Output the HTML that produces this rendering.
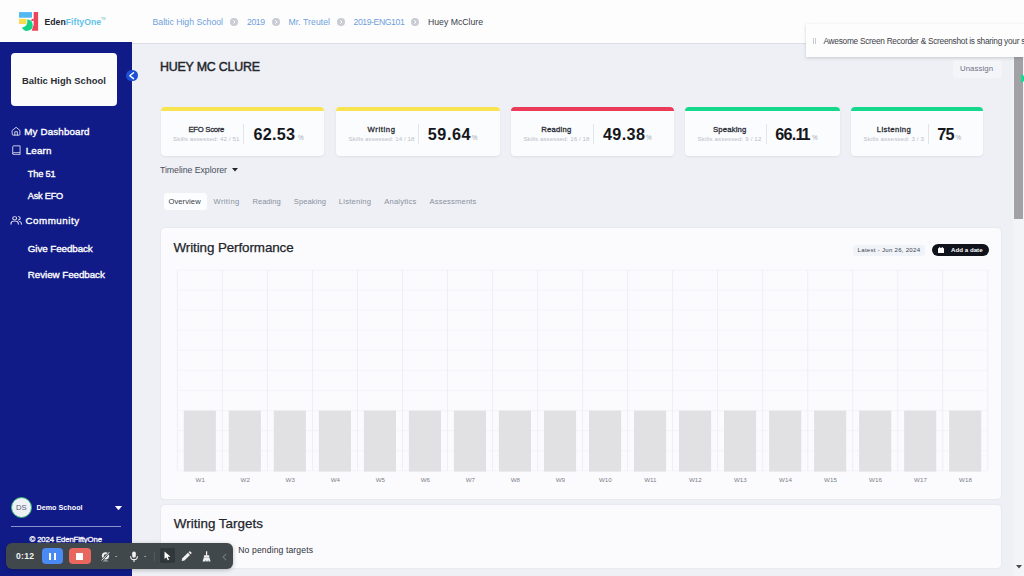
<!DOCTYPE html>
<html lang="en">
<head>
<meta charset="utf-8">
<title>EdenFiftyOne - Huey McClure</title>
<style>
*{box-sizing:border-box;margin:0;padding:0}
html,body{width:1024px;height:576px;overflow:hidden}
body{position:relative;background:#eef0f5;font-family:"Liberation Sans",sans-serif;color:#1f2430}
.t{position:absolute;white-space:nowrap;line-height:1;transform:translateY(-50%)}
.abs{position:absolute}
/* header */
#hdr{position:absolute;left:0;top:0;width:1024px;height:44px;background:#fdfdfe;border-bottom:1px solid #dcdee7}
.bc{font-size:8.7px;color:#6f9fdc}
.sep{position:absolute;width:8px;height:8px;border-radius:50%;background:#c9ccd3;top:17.5px}
/* sidebar */
#side{position:absolute;left:0;top:43px;width:132px;height:533px;background:#111b87}
#side::before{content:"";position:absolute;left:0;top:-0.700px;width:132px;height:1px;background:#111b87}
#school{position:absolute;left:10.600px;top:10.200px;width:106.600px;height:52.800px;background:#fcfcfd;border-radius:4px}
.nav{font-size:9.800px;color:#fff;-webkit-text-stroke:.35px #fff}
/* cards */
.sc{position:absolute;top:107px;height:49px;background:#fbfcfd;border-radius:4px;box-shadow:0 1px 2px rgba(100,110,140,.12)}
.sc i{position:absolute;left:0;top:0;right:0;height:4px;border-radius:4px 4px 0 0}
.sc b.l{font-size:7.700px;color:#2a2d36;font-weight:normal;-webkit-text-stroke:.3px #2a2d36}
.sc span.s{font-size:6.2px;color:#b9bdc8}
.sc em{position:absolute;top:17px;width:1px;height:20px;background:#e2e5ec}
.sc b.v{font-size:16.200px;color:#15171c}
.sc span.p{font-size:6.400px;color:#a4a8b3}
.tab{font-size:7.6px;color:#8a90a0}
.panel{position:absolute;background:#fbfbfd;border-radius:4px;box-shadow:0 0 2px rgba(120,130,160,.18)}
</style>
</head>
<body>

<!-- HEADER -->
<div id="hdr">
  <svg class="abs" style="left:19px;top:12px" width="20" height="20" viewBox="0 0 20 20">
    <rect x="0" y="0.100" width="13" height="5.600" fill="#52b8f0"/>
    <rect x="0" y="6.800" width="7.400" height="5.200" fill="#fbdc4e"/>
    <path d="M8.200 7.600A5.600 5.600 0 1 1 3 15.500Q7.400 14.600 8.200 11z" fill="#12d486"/>
    <path d="M14.700 0.100h4.400v18.600h-6.400l2-6z" fill="#ee4359"/>
    <path d="M14.700 6.400 12.300 7.400v1.600l2.400 0z" fill="#ee4359"/>
  </svg>
  <span class="t" id="logo1" style="left:44.5px;top:22px;font-size:8.7px;font-weight:bold;color:#23252d;letter-spacing:0.01px">Eden<span style="color:#62c3ea">FiftyOne</span><span style="font-size:3px;vertical-align:top;color:#8fd0c8">TM</span></span>

  <span class="t bc" id="bc1" style="left:152.5px;top:21.5px">Baltic High School</span>
  <span class="sep" style="left:229.900px"><svg width="8" height="8" viewBox="0 0 8 8" style="display:block"><path d="M3.300 2.300 5 4 3.300 5.700" fill="none" stroke="#fff" stroke-width="1"/></svg></span>
  <span class="t bc" id="bc2" style="left:247.0px;top:21.5px;letter-spacing:-0.45px">2019</span>
  <span class="sep" style="left:272.100px"><svg width="8" height="8" viewBox="0 0 8 8" style="display:block"><path d="M3.300 2.300 5 4 3.300 5.700" fill="none" stroke="#fff" stroke-width="1"/></svg></span>
  <span class="t bc" id="bc3" style="left:288.5px;top:21.5px;letter-spacing:0.05px">Mr. Treutel</span>
  <span class="sep" style="left:337px"><svg width="8" height="8" viewBox="0 0 8 8" style="display:block"><path d="M3.300 2.300 5 4 3.300 5.700" fill="none" stroke="#fff" stroke-width="1"/></svg></span>
  <span class="t bc" id="bc4" style="left:353.5px;top:21.5px;letter-spacing:-0.43px">2019-ENG101</span>
  <span class="sep" style="left:410.8px"><svg width="8" height="8" viewBox="0 0 8 8" style="display:block"><path d="M3.300 2.300 5 4 3.300 5.700" fill="none" stroke="#fff" stroke-width="1"/></svg></span>
  <span class="t bc" id="bc5" style="left:428.0px;top:21.5px;color:#3a3d46">Huey McClure</span>
</div>

<!-- SIDEBAR -->
<div id="side">
  <div id="school"><span class="t" id="sch" style="left:11.3px;top:28px;font-size:9.4px;font-weight:bold;color:#2b2d33;letter-spacing:0.07px">Baltic High School</span></div>
  <!-- collapse button -->
  <!-- nav -->
  <svg class="abs" style="left:10.800px;top:82.800px" width="10.200" height="10.200" viewBox="0 0 24 24" fill="none" stroke="#e8eaf6" stroke-width="2" stroke-linecap="round" stroke-linejoin="round"><path d="M3 10.5 12 3l9 7.5V20a1.5 1.5 0 0 1-1.5 1.5h-15A1.500 1.500 0 0 1 3 20z"/><path d="M9 21.500v-8h6v8"/></svg>
  <span class="t nav" id="n1" style="left:24.3px;top:88.5px;letter-spacing:0.14px">My Dashboard</span>
  <svg class="abs" style="left:11.800px;top:101.800px" width="8.800" height="10.500" viewBox="0 0 18 21" fill="none" stroke="#e8eaf6" stroke-width="1.700" stroke-linejoin="round"><path d="M1.500 18V3.500a2 2 0 0 1 2-2h13v18h-13a2 2 0 0 1-2-2v0a2 2 0 0 1 2-2h13"/></svg>
  <span class="t nav" id="n2" style="left:25.7px;top:107.500px;letter-spacing:0.16px">Learn</span>
  <span class="t nav" id="n3" style="font-size:9.200px;left:27.8px;top:132.4px;letter-spacing:-0.16px">The 51</span>
  <span class="t nav" id="n4" style="font-size:9.200px;left:27.8px;top:153.6px;letter-spacing:-0.23px">Ask EFO</span>
  <svg class="abs" style="left:9.600px;top:172.300px" width="12.400" height="10.600" viewBox="0 0 24 24" preserveAspectRatio="none" fill="none" stroke="#eceefa" stroke-width="2" stroke-linecap="round" stroke-linejoin="round"><circle cx="9" cy="7.500" r="3.800"/><path d="M2 21v-2a5 5 0 0 1 5-5h4a5 5 0 0 1 5 5v2"/><path d="M16 3.700a3.800 3.800 0 0 1 0 7.600"/><path d="M22 21v-2a5 5 0 0 0-3.500-4.700"/></svg>
  <span class="t nav" id="n5" style="left:25.4px;top:177.9px;letter-spacing:0.53px">Community</span>
  <span class="t nav" id="n6" style="left:27.8px;top:206.4px;letter-spacing:-0.08px">Give Feedback</span>
  <span class="t nav" id="n7" style="left:27.8px;top:231.7px;letter-spacing:-0.06px">Review Feedback</span>
  <!-- footer -->
  <div class="abs" id="av" style="left:11px;top:454px;width:21px;height:21px;border-radius:50%;background:#eef1f6;border:1.500px solid #2fae6b"><span class="t" style="left:4px;top:9.700px;font-size:7.700px;color:#5b6070">DS</span></div>
  <span class="t" id="demo" style="left:36.5px;top:464.600px;font-size:7.200px;font-weight:bold;color:#fff;letter-spacing:0.01px">Demo School</span>
  <svg class="abs" style="left:114.700px;top:463px" width="7" height="4.200" viewBox="0 0 7 4.200"><path d="M0.300 0h6.400L3.500 4z" fill="#fff" stroke="#fff" stroke-width=".5" stroke-linejoin="round"/></svg>
  <div class="abs" style="left:10.500px;top:482.700px;width:110.500px;height:1px;background:#8b92c9"></div>
  <span class="t" id="copy" style="left:29.5px;top:496.500px;font-size:7.800px;color:#fff;-webkit-text-stroke:.3px #fff;letter-spacing:-0.14px">© 2024 EdenFiftyOne</span>
</div>

<!-- MAIN -->
<span class="t" id="title" style="left:160.0px;top:66.5px;font-size:12.400px;color:#23252b;-webkit-text-stroke:.45px #23252b;letter-spacing:-0.20px">HUEY MC CLURE</span>

<!-- SCORE CARDS -->
<div class="sc" id="c0" style="left:160.5px;width:163.5px"><i style="background:#f8e350"></i>
  <b class="t l" id="c0l" style="left:28.0px;top:22.5px;letter-spacing:-0.27px">EFO Score</b>
  <span class="t s" id="c0s" style="left:12.5px;top:32px;letter-spacing:0.08px">Skills assessed: 42 / 51</span>
  <em style="left:82.5px"></em>
  <b class="t v" id="c0v" style="left:93.0px;top:26.700px;letter-spacing:0.25px">62.53</b>
  <span class="t p" id="c0p" style="left:137.5px;top:30.5px">%</span>
</div>
<div class="sc" id="c1" style="left:336px;width:163.5px"><i style="background:#f8e350"></i>
  <b class="t l" id="c1l" style="left:31.6px;top:22.5px;letter-spacing:0.60px">Writing</b>
  <span class="t s" id="c1s" style="left:12.6px;top:32px;letter-spacing:0.05px">Skills assessed: 14 / 18</span>
  <em style="left:81.9px"></em>
  <b class="t v" id="c1v" style="left:91.7px;top:26.700px;letter-spacing:0.60px">59.64</b>
  <span class="t p" id="c1p" style="left:135.7px;top:30.5px">%</span>
</div>
<div class="sc" id="c2" style="left:510.7px;width:163px"><i style="background:#ec3b58"></i>
  <b class="t l" id="c2l" style="left:30.6px;top:22.5px;letter-spacing:0.21px">Reading</b>
  <span class="t s" id="c2s" style="left:12.7px;top:32px;letter-spacing:0.06px">Skills assessed: 16 / 18</span>
  <em style="left:82.3px"></em>
  <b class="t v" id="c2v" style="left:92.2px;top:26.700px;letter-spacing:0.40px">49.38</b>
  <span class="t p" id="c2p" style="left:135.3px;top:30.5px">%</span>
</div>
<div class="sc" id="c3" style="left:685.3px;width:154.3px"><i style="background:#14d98c"></i>
  <b class="t l" id="c3l" style="left:27.7px;top:22.5px;letter-spacing:0.18px">Speaking</b>
  <span class="t s" id="c3s" style="left:12.2px;top:32px;letter-spacing:0.12px">Skills assessed: 9 / 12</span>
  <em style="left:80.3px"></em>
  <b class="t v" id="c3v" style="left:89.9px;top:26.700px;letter-spacing:-0.77px">66.<span style="letter-spacing:-2.900px">1</span>1</b>
  <span class="t p" id="c3p" style="left:126.7px;top:30.5px">%</span>
</div>
<div class="sc" id="c4" style="left:851.2px;width:131.8px"><i style="background:#14d98c"></i>
  <b class="t l" id="c4l" style="left:25.6px;top:22.5px;letter-spacing:0.39px">Listening</b>
  <span class="t s" id="c4s" style="left:12.3px;top:32px;letter-spacing:0.13px">Skills assessed: 3 / 3</span>
  <em style="left:77.1px"></em>
  <b class="t v" id="c4v" style="left:86.0px;top:26.700px;letter-spacing:-0.71px">75</b>
  <span class="t p" id="c4p" style="left:104.3px;top:30.5px">%</span>
</div>

<span class="t" id="tl" style="left:160.0px;top:170px;font-size:8.8px;color:#4a4f5c;letter-spacing:-0.07px">Timeline Explorer</span>
<svg class="abs" style="left:231.5px;top:168px" width="6" height="4" viewBox="0 0 6 4"><path d="M0 0h6L3 3.600z" fill="#23252b"/></svg>

<!-- TABS -->
<div class="abs" style="left:163.500px;top:193px;width:43.500px;height:16.500px;background:#fcfdfe;border-radius:3px"></div>
<span class="t tab" id="t0" style="left:168.4px;top:202px;color:#3a3e4a;letter-spacing:0.09px">Overview</span>
<span class="t tab" id="t1" style="left:213.5px;top:202px;letter-spacing:0.37px">Writing</span>
<span class="t tab" id="t2" style="left:252.5px;top:202px;letter-spacing:-0.03px">Reading</span>
<span class="t tab" id="t3" style="left:293.8px;top:202px;letter-spacing:0.08px">Speaking</span>
<span class="t tab" id="t4" style="left:338.8px;top:202px;letter-spacing:0.22px">Listening</span>
<span class="t tab" id="t5" style="left:384.2px;top:202px;letter-spacing:0.20px">Analytics</span>
<span class="t tab" id="t6" style="left:429.5px;top:202px;letter-spacing:0.17px">Assessments</span>

<!-- PERFORMANCE PANEL -->
<div class="panel" id="perf" style="left:160.800px;top:228px;width:840.500px;height:270.700px">
  <span class="t" id="wp" style="left:12.7px;top:19.500px;font-size:13.400px;color:#23252b;-webkit-text-stroke:.25px #23252b;letter-spacing:-0.09px">Writing Performance</span>
  <div class="abs" id="latest" style="left:692px;top:16.500px;width:72.500px;height:11.500px;border-radius:3px;background:#f0f3f8"><span class="t" id="lt" style="left:4.8px;top:5.800px;font-size:6.100px;color:#3d424f;letter-spacing:0.26px">Latest - Jun 26, 2024</span></div>
  <div class="abs" id="add" style="left:771.500px;top:16px;width:56.500px;height:12px;border-radius:6px;background:#11131c">
    <svg class="abs" style="left:5.500px;top:2.800px" width="6" height="6.500" viewBox="0 0 12 13"><rect x="0" y="2" width="12" height="11" rx="1.500" fill="#fff"/><rect x="2.500" y="0" width="2" height="3.500" fill="#fff"/><rect x="7.500" y="0" width="2" height="3.500" fill="#fff"/></svg>
    <span class="t" id="ad" style="left:18.7px;top:6px;font-size:6.100px;font-weight:bold;color:#fff;letter-spacing:0.05px">Add a date</span>
  </div>
  <svg class="abs" id="chart" style="left:0;top:0" width="840" height="271" viewBox="160.800 228 840 271" font-family="Liberation Sans, sans-serif">
<line x1="177.2" y1="270.0" x2="987.6" y2="270.0" stroke="#f4f4f9" stroke-width="1"/>
<line x1="177.2" y1="290.1" x2="987.6" y2="290.1" stroke="#f4f4f9" stroke-width="1"/>
<line x1="177.2" y1="310.2" x2="987.6" y2="310.2" stroke="#f4f4f9" stroke-width="1"/>
<line x1="177.2" y1="330.2" x2="987.6" y2="330.2" stroke="#f4f4f9" stroke-width="1"/>
<line x1="177.2" y1="350.3" x2="987.6" y2="350.3" stroke="#f4f4f9" stroke-width="1"/>
<line x1="177.2" y1="370.4" x2="987.6" y2="370.4" stroke="#f4f4f9" stroke-width="1"/>
<line x1="177.2" y1="390.5" x2="987.6" y2="390.5" stroke="#f4f4f9" stroke-width="1"/>
<line x1="177.2" y1="410.6" x2="987.6" y2="410.6" stroke="#f4f4f9" stroke-width="1"/>
<line x1="177.2" y1="430.6" x2="987.6" y2="430.6" stroke="#f4f4f9" stroke-width="1"/>
<line x1="177.2" y1="450.7" x2="987.6" y2="450.7" stroke="#f4f4f9" stroke-width="1"/>
<line x1="177.2" y1="470.8" x2="987.6" y2="470.8" stroke="#f4f4f9" stroke-width="1"/>
<line x1="177.2" y1="270" x2="177.2" y2="471" stroke="#eeeef5" stroke-width="1"/>
<line x1="222.2" y1="270" x2="222.2" y2="471" stroke="#eeeef5" stroke-width="1"/>
<line x1="267.2" y1="270" x2="267.2" y2="471" stroke="#eeeef5" stroke-width="1"/>
<line x1="312.3" y1="270" x2="312.3" y2="471" stroke="#eeeef5" stroke-width="1"/>
<line x1="357.3" y1="270" x2="357.3" y2="471" stroke="#eeeef5" stroke-width="1"/>
<line x1="402.3" y1="270" x2="402.3" y2="471" stroke="#eeeef5" stroke-width="1"/>
<line x1="447.3" y1="270" x2="447.3" y2="471" stroke="#eeeef5" stroke-width="1"/>
<line x1="492.3" y1="270" x2="492.3" y2="471" stroke="#eeeef5" stroke-width="1"/>
<line x1="537.4" y1="270" x2="537.4" y2="471" stroke="#eeeef5" stroke-width="1"/>
<line x1="582.4" y1="270" x2="582.4" y2="471" stroke="#eeeef5" stroke-width="1"/>
<line x1="627.4" y1="270" x2="627.4" y2="471" stroke="#eeeef5" stroke-width="1"/>
<line x1="672.4" y1="270" x2="672.4" y2="471" stroke="#eeeef5" stroke-width="1"/>
<line x1="717.4" y1="270" x2="717.4" y2="471" stroke="#eeeef5" stroke-width="1"/>
<line x1="762.5" y1="270" x2="762.5" y2="471" stroke="#eeeef5" stroke-width="1"/>
<line x1="807.5" y1="270" x2="807.5" y2="471" stroke="#eeeef5" stroke-width="1"/>
<line x1="852.5" y1="270" x2="852.5" y2="471" stroke="#eeeef5" stroke-width="1"/>
<line x1="897.5" y1="270" x2="897.5" y2="471" stroke="#eeeef5" stroke-width="1"/>
<line x1="942.5" y1="270" x2="942.5" y2="471" stroke="#eeeef5" stroke-width="1"/>
<line x1="987.6" y1="270" x2="987.6" y2="471" stroke="#eeeef5" stroke-width="1"/>
<rect x="183.6" y="410.600" width="32.100" height="61" fill="#e1e1e4"/>
<text x="200.0" y="482.300" font-size="6.200" fill="#7b7e87" text-anchor="middle">W1</text>
<rect x="228.6" y="410.600" width="32.100" height="61" fill="#e1e1e4"/>
<text x="245.0" y="482.300" font-size="6.200" fill="#7b7e87" text-anchor="middle">W2</text>
<rect x="273.6" y="410.600" width="32.100" height="61" fill="#e1e1e4"/>
<text x="290.0" y="482.300" font-size="6.200" fill="#7b7e87" text-anchor="middle">W3</text>
<rect x="318.7" y="410.600" width="32.100" height="61" fill="#e1e1e4"/>
<text x="335.1" y="482.300" font-size="6.200" fill="#7b7e87" text-anchor="middle">W4</text>
<rect x="363.7" y="410.600" width="32.100" height="61" fill="#e1e1e4"/>
<text x="380.1" y="482.300" font-size="6.200" fill="#7b7e87" text-anchor="middle">W5</text>
<rect x="408.7" y="410.600" width="32.100" height="61" fill="#e1e1e4"/>
<text x="425.1" y="482.300" font-size="6.200" fill="#7b7e87" text-anchor="middle">W6</text>
<rect x="453.7" y="410.600" width="32.100" height="61" fill="#e1e1e4"/>
<text x="470.1" y="482.300" font-size="6.200" fill="#7b7e87" text-anchor="middle">W7</text>
<rect x="498.7" y="410.600" width="32.100" height="61" fill="#e1e1e4"/>
<text x="515.1" y="482.300" font-size="6.200" fill="#7b7e87" text-anchor="middle">W8</text>
<rect x="543.8" y="410.600" width="32.100" height="61" fill="#e1e1e4"/>
<text x="560.2" y="482.300" font-size="6.200" fill="#7b7e87" text-anchor="middle">W9</text>
<rect x="588.8" y="410.600" width="32.100" height="61" fill="#e1e1e4"/>
<text x="605.2" y="482.300" font-size="6.200" fill="#7b7e87" text-anchor="middle">W10</text>
<rect x="633.8" y="410.600" width="32.100" height="61" fill="#e1e1e4"/>
<text x="650.2" y="482.300" font-size="6.200" fill="#7b7e87" text-anchor="middle">W11</text>
<rect x="678.8" y="410.600" width="32.100" height="61" fill="#e1e1e4"/>
<text x="695.2" y="482.300" font-size="6.200" fill="#7b7e87" text-anchor="middle">W12</text>
<rect x="723.8" y="410.600" width="32.100" height="61" fill="#e1e1e4"/>
<text x="740.2" y="482.300" font-size="6.200" fill="#7b7e87" text-anchor="middle">W13</text>
<rect x="768.9" y="410.600" width="32.100" height="61" fill="#e1e1e4"/>
<text x="785.3" y="482.300" font-size="6.200" fill="#7b7e87" text-anchor="middle">W14</text>
<rect x="813.9" y="410.600" width="32.100" height="61" fill="#e1e1e4"/>
<text x="830.3" y="482.300" font-size="6.200" fill="#7b7e87" text-anchor="middle">W15</text>
<rect x="858.9" y="410.600" width="32.100" height="61" fill="#e1e1e4"/>
<text x="875.3" y="482.300" font-size="6.200" fill="#7b7e87" text-anchor="middle">W16</text>
<rect x="903.9" y="410.600" width="32.100" height="61" fill="#e1e1e4"/>
<text x="920.3" y="482.300" font-size="6.200" fill="#7b7e87" text-anchor="middle">W17</text>
<rect x="948.9" y="410.600" width="32.100" height="61" fill="#e1e1e4"/>
<text x="965.3" y="482.300" font-size="6.200" fill="#7b7e87" text-anchor="middle">W18</text>
  </svg>
</div>

<!-- TARGETS PANEL -->
<div class="panel" id="targ" style="left:160.800px;top:504.700px;width:840.500px;height:63.600px">
  <span class="t" id="wt" style="left:13.0px;top:19px;font-size:13.400px;color:#23252b;-webkit-text-stroke:.25px #23252b;letter-spacing:0.02px">Writing Targets</span>
  <span class="t" id="np" style="left:77.5px;top:45px;font-size:8.600px;color:#2d303a;letter-spacing:0.12px">No pending targets</span>
</div>

<!-- collapse button -->
<div class="abs" style="left:126.300px;top:69.500px;width:11.400px;height:11.400px;border-radius:50%;background:#1a4fd6"><svg width="11.400" height="11.400" viewBox="0 0 12 12" style="display:block"><path d="M7.900 2.900 4 6 7.900 9.100" fill="none" stroke="#fff" stroke-width="1.500" stroke-linecap="round" stroke-linejoin="round"/></svg></div>

<!-- unassign -->
<div class="abs" style="left:953px;top:60px;width:48.800px;height:17.500px;border-radius:3px;background:#f3f5f9"><span class="t" id="un" style="left:7.0px;top:8.500px;font-size:7.800px;color:#6b7385;letter-spacing:0.07px">Unassign</span></div>

<!-- scrollbar -->
<div class="abs" style="left:1013px;top:43px;width:11px;height:533px;background:#f3f4f8"></div>
<div class="abs" style="left:1014px;top:57px;width:8.500px;height:161.500px;background:#a2a2a6"></div>
<svg class="abs" style="left:1016px;top:565px" width="6" height="4" viewBox="0 0 6 4"><path d="M0 0h6L3 3.500z" fill="#4a4a4a"/></svg>
<svg class="abs" style="left:1021px;top:73.500px" width="3" height="9" viewBox="0 0 3 9"><path d="M0 0 3 2v5L0 9z" fill="#19d890"/></svg>

<!-- screen share notification -->
<div class="abs" style="left:806px;top:24px;width:218px;height:33px;background:#fdfdfe;box-shadow:0 1px 3px rgba(60,64,80,.22)">
  <div class="abs" style="left:6.500px;top:13.500px;width:1.100px;height:6.500px;background:#c9cbd2"></div>
  <div class="abs" style="left:9.200px;top:13.500px;width:1.100px;height:6.500px;background:#c9cbd2"></div>
  <span class="t" style="left:17.500px;top:17.200px;font-size:8.300px;color:#3c3e46;letter-spacing:-0.27px"><span id="notif">Awesome Screen Recorder &amp; Screenshot is sharing your</span> screen</span>
</div>

<!-- recorder toolbar -->
<div class="abs" id="tb" style="left:6.300px;top:543px;width:226.400px;height:26.300px;border-radius:6px;background:#40484b;box-shadow:0 1px 4px rgba(0,0,0,.25)">
  <span class="t" id="tm" style="left:9.7px;top:13.400px;font-size:8.600px;font-weight:bold;color:#f2f2f2;letter-spacing:0.27px">0:12</span>
  <div class="abs" style="left:35.900px;top:5.200px;width:21.100px;height:15.900px;border-radius:4px;background:#4a8af4"><i class="abs" style="left:6.500px;top:4.500px;width:2.400px;height:7px;background:#fff"></i><i class="abs" style="left:11.700px;top:4.500px;width:2.400px;height:7px;background:#fff"></i></div>
  <div class="abs" style="left:62.800px;top:5.200px;width:21.600px;height:15.900px;border-radius:4px;background:#e8675f"><i class="abs" style="left:6.600px;top:4.500px;width:7.500px;height:7px;background:#fff"></i></div>
  <!-- webcam off -->
  <svg class="abs" style="left:93.400px;top:8px" width="11" height="11" viewBox="0 0 24 24"><circle cx="12" cy="10.500" r="8" fill="#f1f1f1"/><circle cx="12" cy="10.500" r="3.600" fill="#40484b"/><path d="M5 22.500c2-2.500 12-2.500 14 0z" fill="#f1f1f1"/><path d="M3 21 21 2" stroke="#40484b" stroke-width="4.500"/><path d="M3.500 20.500 20.500 2.500" stroke="#f1f1f1" stroke-width="2"/></svg>
  <svg class="abs" style="left:109.200px;top:12.800px" width="2.400" height="1.600" viewBox="0 0 6 4"><path d="M0 0h6L3 4z" fill="#a9afb3"/></svg>
  <!-- mic -->
  <svg class="abs" style="left:122.700px;top:7.800px" width="10" height="11.800" viewBox="0 0 22 26"><rect x="7" y="1" width="8" height="14" rx="4" fill="#f1f1f1"/><path d="M3.500 11.500a7.500 7.500 0 0 0 15 0" fill="none" stroke="#f1f1f1" stroke-width="2.400"/><path d="M11 19v5" stroke="#f1f1f1" stroke-width="2.400"/></svg>
  <svg class="abs" style="left:138.200px;top:12.800px" width="2.400" height="1.600" viewBox="0 0 6 4"><path d="M0 0h6L3 4z" fill="#a9afb3"/></svg>
  <div class="abs" style="left:147.800px;top:9.400px;width:1px;height:9px;background:#535a5e"></div>
  <!-- cursor -->
  <div class="abs" style="left:153.600px;top:5.300px;width:14.700px;height:15.200px;background:#31383b;border-radius:1px"><svg style="display:block;margin:3.200px 0 0 4.200px" width="7" height="10" viewBox="0 0 14 20"><path d="M1 1v15l3.800-3.500 2.700 6.200 2.600-1.100-2.700-6.100H13z" fill="#fff"/></svg></div>
  <!-- pencil -->
  <svg class="abs" style="left:174.600px;top:8px" width="10.800" height="10.800" viewBox="0 0 22 22"><path d="M1.500 20.500l1.200-5.500L14 3.700l4.300 4.300L7 19.300z" fill="#f1f1f1"/><path d="M15.300 2.400l1.600-1.600a1.400 1.400 0 0 1 2 0l2.300 2.300a1.400 1.400 0 0 1 0 2l-1.600 1.600z" fill="#f1f1f1"/></svg>
  <!-- broom -->
  <svg class="abs" style="left:195.600px;top:7.900px" width="9.200" height="11" viewBox="0 0 22 26"><rect x="9.500" y="0.500" width="3" height="10" fill="#f1f1f1"/><rect x="4.500" y="10" width="13" height="4" rx="1" fill="#f1f1f1"/><path d="M4.500 15h13l3 10h-3.500l-1-4-0.500 4h-3l-0.500-4-0.500 4h-3l-0.500-4-1 4H1.500z" fill="#f1f1f1"/></svg>
  <!-- chevron -->
  <svg class="abs" style="left:216.200px;top:9.500px" width="5" height="8" viewBox="0 0 5 8"><path d="M4.200 0.800 1 4l3.200 3.200" fill="none" stroke="#727a7f" stroke-width="1.100"/></svg>
</div>

</body>
</html>
